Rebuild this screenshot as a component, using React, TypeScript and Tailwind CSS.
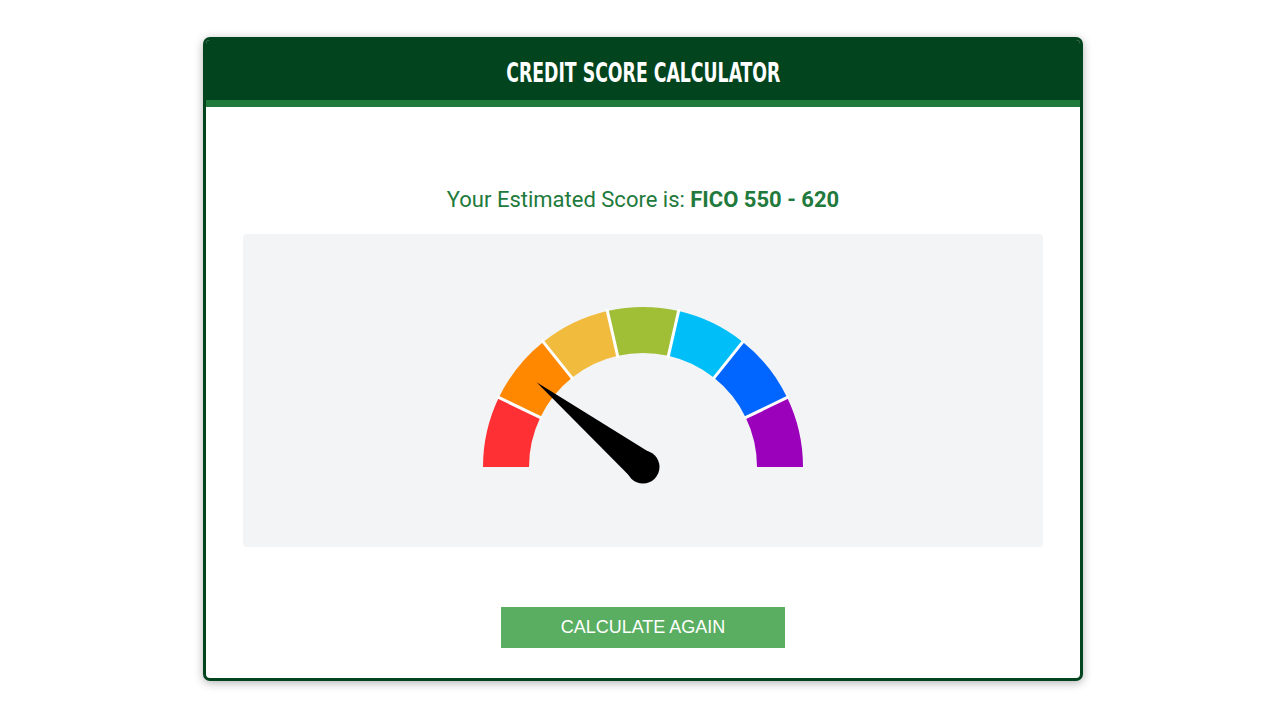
import { Fragment } from "react"

const colors = ["#ff3034", "#ff8800", "#f1bb3e", "#a1bf36", "#00bff8", "#0066ff", "#9b00bb"]

const cx = 400
const cy = 233
const rOuter = 160
const rInner = 114

const pt = (r: number, deg: number) => {
	const a = (deg * Math.PI) / 180
	return [cx + r * Math.cos(a), cy - r * Math.sin(a)]
}

const segment = (from: number, to: number) => {
	const [x1, y1] = pt(rOuter, from)
	const [x2, y2] = pt(rOuter, to)
	const [x3, y3] = pt(rInner, to)
	const [x4, y4] = pt(rInner, from)
	return `M${x1} ${y1} A${rOuter} ${rOuter} 0 0 1 ${x2} ${y2} L${x3} ${y3} A${rInner} ${rInner} 0 0 0 ${x4} ${y4} Z`
}

const Gauge = () => {
	const step = 180 / colors.length
	const needleDeg = 141.5
	const [tx, ty] = pt(136, needleDeg)
	const [ax, ay] = pt(16, needleDeg + 90)
	const [bx, by] = pt(16, needleDeg - 90)

	return (
		<svg width="800" height="313" viewBox="0 0 800 313">
			{colors.map((c, i) => (
				<Fragment key={i}>
					<path d={segment(180 - i * step, 180 - (i + 1) * step)} fill={c} />
				</Fragment>
			))}
			{colors.slice(1).map((_, i) => {
				const [x1, y1] = pt(rInner - 2, 180 - (i + 1) * step)
				const [x2, y2] = pt(rOuter + 2, 180 - (i + 1) * step)
				return <line key={i} x1={x1} y1={y1} x2={x2} y2={y2} stroke="#ffffff" strokeWidth="3" />
			})}
			<path d={`M${tx} ${ty} L${ax} ${ay} L${bx} ${by} Z`} fill="#000" />
			<circle cx={cx} cy={cy} r="16.5" fill="#000" />
		</svg>
	)
}

const App = () => {
	return (
		<div className="min-h-[720px] bg-white pt-[37px]">
			<div className="ml-[203px] w-[880px] overflow-hidden rounded-[7px] border-[3px] border-[#02441d] bg-white shadow-[0_2px_10px_rgba(0,0,0,0.3)]">
				<div className="flex h-[60px] items-center justify-center bg-[#02441d] pt-[6px]">
					<h1
						className="scale-x-[0.74] text-[26px] font-bold uppercase leading-none text-white"
						style={{ fontFamily: '"DejaVu Sans Condensed", "DejaVu Sans", sans-serif' }}>
						Credit Score Calculator
					</h1>
				</div>
				<div className="h-[7px] bg-[#1f7a3b]" />
				<div className="flex flex-col items-center px-[37px] pb-[30px]">
					<p className="mt-[78px] text-[22px] leading-[30px] text-[#217a3b]" style={{ fontFamily: "Roboto, sans-serif" }}>
						Your Estimated Score is: <span className="font-bold">FICO 550 - 620</span>
					</p>
					<div className="mt-[19px] h-[313px] w-[800px] rounded-[4px] bg-[#f3f4f6]">
						<Gauge />
					</div>
					<button
						className="mt-[60px] h-[41px] w-[284px] bg-[#5aae61] text-[18px] uppercase text-white"
						style={{ fontFamily: '"Liberation Sans", Arial, sans-serif' }}>
						Calculate Again
					</button>
				</div>
			</div>
		</div>
	)
}

export default App
